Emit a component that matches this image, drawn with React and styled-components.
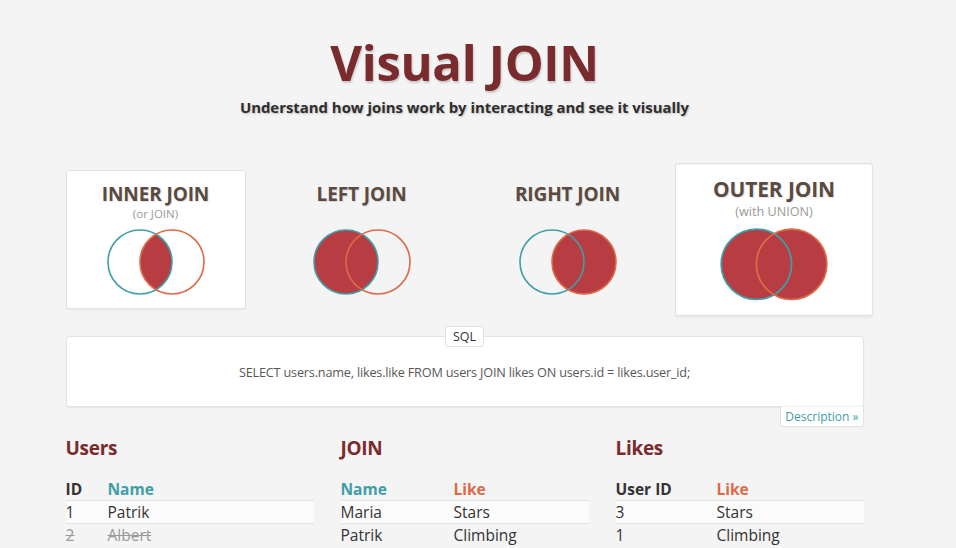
import React from "react";
import styled, { createGlobalStyle, css } from "styled-components";

const Global = createGlobalStyle`
  html, body { margin: 0; padding: 0; background: #f4f4f4; }
  body { font-family: "Open Sans", "Noto Sans", sans-serif; color: #333; padding-right: 27px; }
`;

const TEAL = "#3f9ea8";
const ORANGE = "#dc6a48";
const FILL = "#b73d42";
const MAROON = "#7a2b2e";

const Page = styled.div`
  width: 798px;
  margin: 0 auto;
  padding-top: 30px;
`;

const Header = styled.header`
  text-align: center;
`;

const Title = styled.h1`
  margin: 0;
  font-size: 49px;
  line-height: 64px;
  font-weight: 700;
  color: ${MAROON};
  text-shadow: 1px 2px 2px rgba(0, 0, 0, 0.18);
  letter-spacing: -0.3px;
`;

const Subtitle = styled.p`
  margin: 3px 0 0;
  font-size: 14.9px;
  line-height: 20px;
  font-weight: 700;
  color: #2e2e2e;
  text-shadow: 1px 1px 2px rgba(0, 0, 0, 0.22);
`;

const JoinGrid = styled.div`
  display: grid;
  grid-template-columns: repeat(4, 180px);
  column-gap: 26px;
  margin-top: 53px;
`;

const Card = styled.div`
  box-sizing: border-box;
  height: 139px;
  padding-top: 11px;
  display: flex;
  flex-direction: column;
  align-items: center;
  border: 1px solid transparent;
  border-radius: 3px;
  ${(p) =>
    (p.$active || p.$hover) &&
    css`
      background: #fff;
      border-color: #e2e2e2;
      box-shadow: 0 1px 2px rgba(0, 0, 0, 0.05);
    `}
  ${(p) =>
    p.$hover &&
    css`
      transform: scale(1.1);
    `}
`;

const CardTitle = styled.div`
  font-size: 19px;
  line-height: 24px;
  font-weight: 700;
  color: #5a4a41;
  letter-spacing: -0.1px;
  text-shadow: 1px 1px 1px rgba(0, 0, 0, 0.12);
`;

const CardSub = styled.div`
  font-size: 11.5px;
  line-height: 16px;
  height: 16px;
  color: #9a9a9a;
`;

const VennBox = styled.svg`
  display: block;
  margin-top: 6px;
`;

function Venn({ type, id }) {
  const cl = 34, cr = 66, cy = 34, r = 32;
  const leftFilled = type === "left" || type === "outer";
  const rightFilled = type === "right" || type === "outer";
  return (
    <VennBox width="100" height="68" viewBox="0 0 100 68">
      <defs>
        <clipPath id={`clip-${id}`}>
          <circle cx={cl} cy={cy} r={r} />
        </clipPath>
      </defs>
      {leftFilled && <circle cx={cl} cy={cy} r={r} fill={FILL} />}
      {rightFilled && <circle cx={cr} cy={cy} r={r} fill={FILL} />}
      {type === "inner" && (
        <circle cx={cr} cy={cy} r={r} fill={FILL} clipPath={`url(#clip-${id})`} />
      )}
      <circle cx={cl} cy={cy} r={r} fill="none" stroke={TEAL} strokeWidth="1.6" />
      <circle cx={cr} cy={cy} r={r} fill="none" stroke={ORANGE} strokeWidth="1.6" />
    </VennBox>
  );
}

const joins = [
  { type: "inner", title: "INNER JOIN", sub: "(or JOIN)", active: true },
  { type: "left", title: "LEFT JOIN", sub: "" },
  { type: "right", title: "RIGHT JOIN", sub: "" },
  { type: "outer", title: "OUTER JOIN", sub: "(with UNION)", hover: true },
];

const SqlSection = styled.section`
  margin-top: 17px;
  display: flex;
  flex-direction: column;
  align-items: center;
`;

const Tab = styled.div`
  position: relative;
  z-index: 1;
  background: #fff;
  border: 1px solid #e1e1e1;
  border-radius: 3px;
  font-size: 12.5px;
  line-height: 19px;
  padding: 0 7px;
  color: ${(p) => (p.$link ? TEAL : "#333")};
`;

const SqlTab = styled(Tab)`
  margin-bottom: -11px;
`;

const SqlBox = styled.div`
  box-sizing: border-box;
  align-self: stretch;
  height: 71px;
  background: #fff;
  border: 1px solid #e4e4e4;
  border-radius: 3px;
  box-shadow: 0 1px 2px rgba(0, 0, 0, 0.06);
  display: flex;
  align-items: center;
  justify-content: center;
  font-size: 12.7px;
  color: #585858;
  letter-spacing: -0.2px;
  padding-top: 1px;
`;

const DescRow = styled.div`
  align-self: stretch;
  display: flex;
  justify-content: flex-end;
  margin-top: -1px;
`;

const DescTab = styled(Tab)`
  border-top-color: #f0f0f0;
  border-radius: 0 0 3px 3px;
  padding: 0 4px;
  font-size: 12px;
`;

const Tables = styled.section`
  display: grid;
  grid-template-columns: repeat(3, 248px);
  column-gap: 27px;
  margin-top: 8px;
`;

const TableHeading = styled.h2`
  margin: 0;
  font-size: 19px;
  line-height: 26px;
  font-weight: 700;
  color: ${MAROON};
  letter-spacing: -0.3px;
`;

const Table = styled.table`
  width: 100%;
  margin-top: 18px;
  border-collapse: collapse;
  font-size: 15.5px;
`;

const Th = styled.th`
  text-align: left;
  font-weight: 700;
  padding: 0;
  line-height: 21px;
  width: ${(p) => p.$w || "auto"};
  color: ${(p) => (p.$tone === "teal" ? TEAL : p.$tone === "orange" ? ORANGE : "#333")};
`;

const Tr = styled.tr`
  border-top: 1px solid #e2e2e2;
  background: ${(p) => (p.$odd ? "#fbfbfb" : "transparent")};
  ${(p) =>
    p.$removed &&
    css`
      color: #9a9a9a;
      text-decoration: line-through;
    `}
`;

const Td = styled.td`
  padding: 0;
  line-height: 22px;
`;

const tables = [
  {
    title: "Users",
    cols: [
      { label: "ID", w: "42px" },
      { label: "Name", tone: "teal" },
    ],
    rows: [
      { cells: ["1", "Patrik"] },
      { cells: ["2", "Albert"], removed: true },
    ],
  },
  {
    title: "JOIN",
    cols: [
      { label: "Name", tone: "teal", w: "113px" },
      { label: "Like", tone: "orange" },
    ],
    rows: [{ cells: ["Maria", "Stars"] }, { cells: ["Patrik", "Climbing"] }],
  },
  {
    title: "Likes",
    cols: [
      { label: "User ID", w: "101px" },
      { label: "Like", tone: "orange" },
    ],
    rows: [{ cells: ["3", "Stars"] }, { cells: ["1", "Climbing"] }],
  },
];

export default function App() {
  return (
    <>
      <Global />
      <Page>
        <Header>
          <Title>Visual JOIN</Title>
          <Subtitle>Understand how joins work by interacting and see it visually</Subtitle>
        </Header>

        <JoinGrid>
          {joins.map((j) => (
            <Card key={j.type} $active={j.active} $hover={j.hover}>
              <CardTitle>{j.title}</CardTitle>
              <CardSub>{j.sub}</CardSub>
              <Venn type={j.type} id={j.type} />
            </Card>
          ))}
        </JoinGrid>

        <SqlSection>
          <SqlTab>SQL</SqlTab>
          <SqlBox>SELECT users.name, likes.like FROM users JOIN likes ON users.id = likes.user_id;</SqlBox>
          <DescRow>
            <DescTab $link>Description »</DescTab>
          </DescRow>
        </SqlSection>

        <Tables>
          {tables.map((t) => (
            <div key={t.title}>
              <TableHeading>{t.title}</TableHeading>
              <Table>
                <thead>
                  <tr>
                    {t.cols.map((c) => (
                      <Th key={c.label} $w={c.w} $tone={c.tone}>
                        {c.label}
                      </Th>
                    ))}
                  </tr>
                </thead>
                <tbody>
                  {t.rows.map((r, i) => (
                    <Tr key={i} $odd={i % 2 === 0} $removed={r.removed}>
                      {r.cells.map((c, k) => (
                        <Td key={k}>{c}</Td>
                      ))}
                    </Tr>
                  ))}
                </tbody>
              </Table>
            </div>
          ))}
        </Tables>
      </Page>
    </>
  );
}
